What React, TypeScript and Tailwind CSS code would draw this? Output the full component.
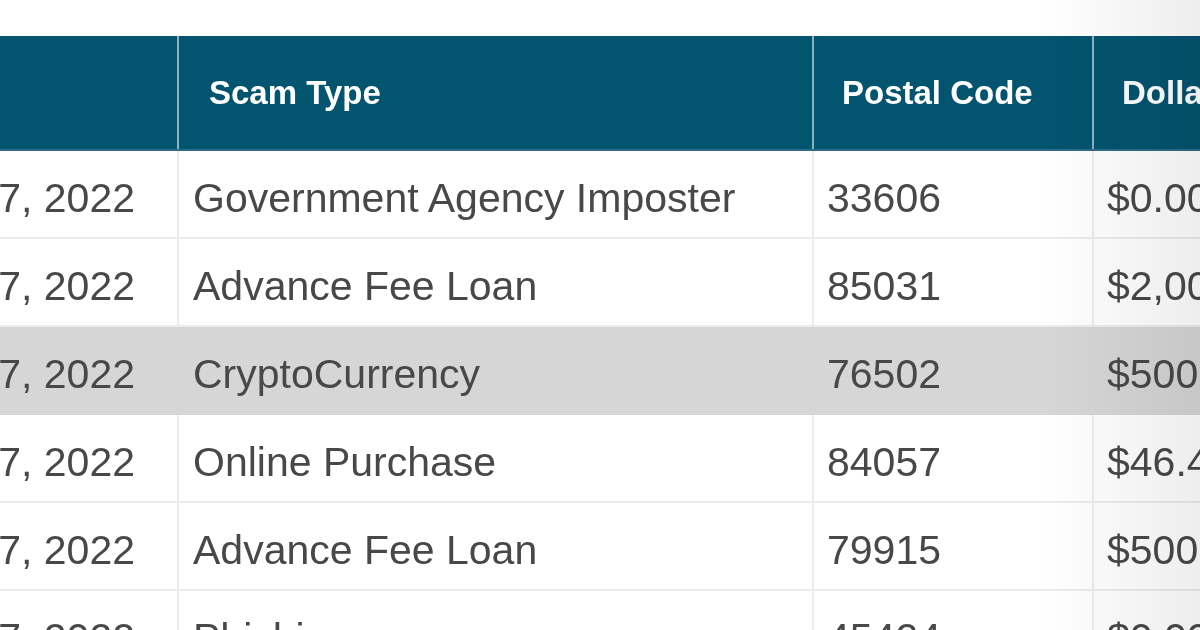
import React from "react";

type Row = { date: string; type: string; zip: string; amount: string; hl?: boolean };

const rows: Row[] = [
  { date: "Jul 07, 2022", type: "Government Agency Imposter", zip: "33606", amount: "$0.00" },
  { date: "Jul 07, 2022", type: "Advance Fee Loan", zip: "85031", amount: "$2,000.00" },
  { date: "Jul 07, 2022", type: "CryptoCurrency", zip: "76502", amount: "$500.00", hl: true },
  { date: "Jul 07, 2022", type: "Online Purchase", zip: "84057", amount: "$46.49" },
  { date: "Jul 07, 2022", type: "Advance Fee Loan", zip: "79915", amount: "$500.00" },
  { date: "Jul 07, 2022", type: "Phishing", zip: "45424", amount: "$0.00" },
];

export default function App() {
  return (
    <div
      className="relative w-[1200px] h-[630px] overflow-hidden bg-white"
      style={{ fontFamily: '"Liberation Sans", Arial, sans-serif' }}
    >
      <div className="pt-[36px] blur-[0.7px]">
        {/* header */}
        <div className="flex w-[1400px] h-[115px] bg-[#03546f] text-white font-bold text-[33px] border-b-2 border-[#2d6c85]">
          <div className="w-[179px] shrink-0 border-r-2 border-[#8fb0bf]" />
          <div className="w-[635px] shrink-0 border-r-2 border-[#8fb0bf] flex items-center pl-[30px]">Scam Type</div>
          <div className="w-[280px] shrink-0 border-r-2 border-[#8fb0bf] flex items-center pl-[28px]">Postal Code</div>
          <div className="flex-1 flex items-center pl-[28px] whitespace-nowrap">Dollar Amount</div>
        </div>
        {/* body */}
        {rows.map((r, i) => (
          <div
            key={i}
            className={`flex w-[1400px] h-[88px] text-[41px] text-[#484848] border-b-2 ${
              r.hl ? "bg-[#d6d6d6] border-[#d6d6d6]" : "bg-white border-[#ececec]"
            }`}
          >
            <div className={`w-[179px] shrink-0 overflow-hidden flex items-center justify-end pt-[10px] pr-[42px] whitespace-nowrap border-r-2 ${r.hl ? "border-[#d6d6d6]" : "border-[#ececec]"}`}>
              {r.date}
            </div>
            <div className={`w-[635px] shrink-0 flex items-center pt-[10px] pl-[14px] whitespace-nowrap border-r-2 ${r.hl ? "border-[#d6d6d6]" : "border-[#ececec]"}`}>
              {r.type}
            </div>
            <div className={`w-[280px] shrink-0 flex items-center pt-[10px] pl-[13px] border-r-2 ${r.hl ? "border-[#d6d6d6]" : "border-[#ececec]"}`}>
              {r.zip}
            </div>
            <div className="flex-1 flex items-center pt-[10px] pl-[13px] whitespace-nowrap">{r.amount}</div>
          </div>
        ))}
      </div>
      {/* right-edge vignette */}
      <div className="pointer-events-none absolute right-0 top-0 h-full w-[160px] bg-linear-to-l from-black/7 to-transparent" />
    </div>
  );
}
